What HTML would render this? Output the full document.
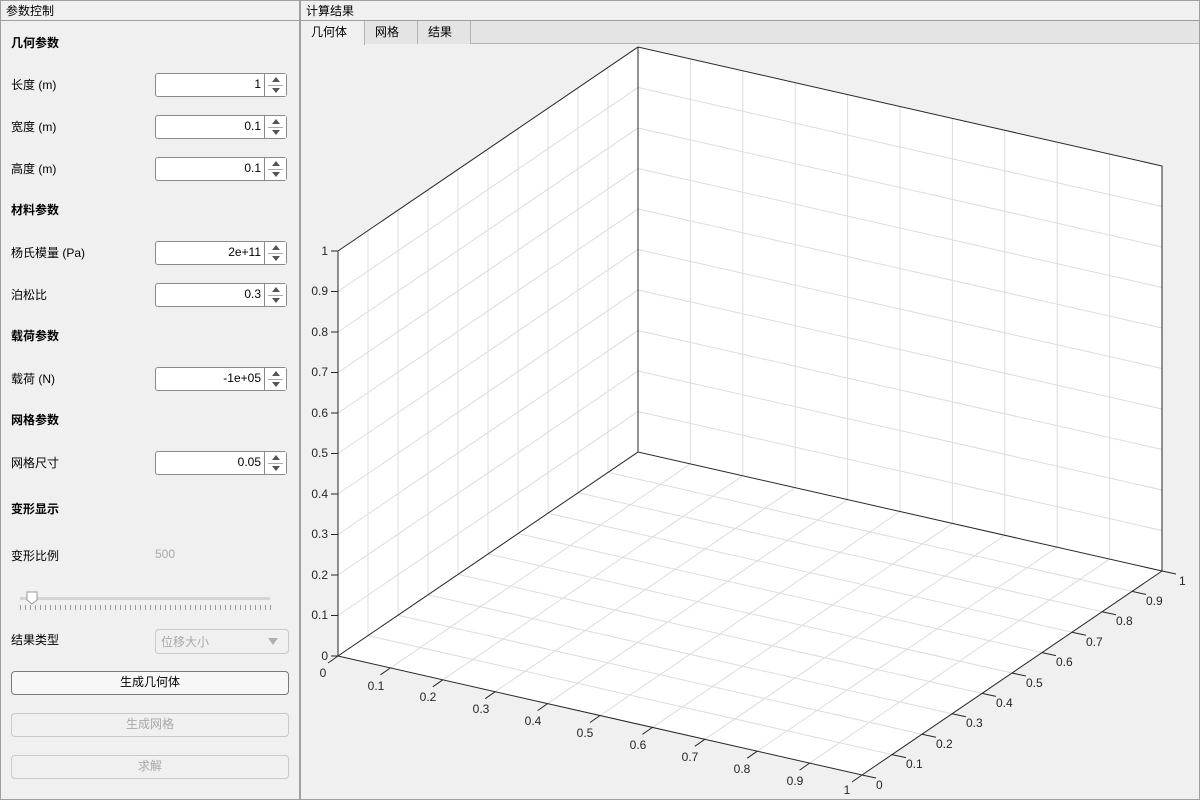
<!DOCTYPE html>
<html><head><meta charset="utf-8"><style>
*{box-sizing:border-box;margin:0;padding:0}
body{width:1200px;height:800px;background:#f0f0f0;font-family:"Liberation Sans","Noto Sans CJK SC",sans-serif;font-size:12px;color:#000;position:relative;overflow:hidden}
.abs{position:absolute}
.panel{position:absolute;box-shadow:inset 0 0 0 1px #a0a0a0;background:#f0f0f0}
.ptitle{position:absolute;left:0;right:0;top:0;height:21px;border:1px solid #a0a0a0;padding:1px 0 0 5px;font-size:12px}
.lbl{position:absolute;left:11px;font-size:12px}
.h{font-weight:bold}
.spin{position:absolute;left:155px;width:132px;height:24px;border:1px solid #8a8a8a;border-radius:3px;background:#fff}
.spin .v{position:absolute;right:25px;top:3px}
.spin .ar{position:absolute;right:0;top:0;width:22px;height:22px;border-left:1px solid #8a8a8a;background:#fff}
.spin .ar:after{content:"";position:absolute;left:3px;right:3px;top:11px;border-top:1px solid #aaa}
.up{position:absolute;left:7px;top:3px;border-left:4px solid transparent;border-right:4px solid transparent;border-bottom:5px solid #555}
.dn{position:absolute;left:7px;top:14px;border-left:4px solid transparent;border-right:4px solid transparent;border-top:5px solid #555}
.btn{position:absolute;left:11px;width:278px;height:24px;border:1px solid #7a7a7a;border-radius:4px;background:#f7f7f7;text-align:center;line-height:21px}
.dis{border-color:#c8c8c8;color:#a8a8a8;background:#f0f0f0}
.tab{position:absolute;top:21px;height:23px;border-right:1px solid #b4b4b4;padding:2px 0 0 10px;background:#e4e4e4}
svg text{font-family:"Liberation Sans",sans-serif;font-size:12px;fill:#262626}
</style></head><body>
<div class="panel" style="left:0;top:0;width:300px;height:800px">
<div class="ptitle">参数控制</div>
<div class="lbl h" style="top:34px">几何参数</div>
<div class="lbl" style="top:76px">长度 (m)</div>
<div class="spin" style="top:73px"><span class="v">1</span><div class="ar"><i class="up"></i><i class="dn"></i></div></div>
<div class="lbl" style="top:118px">宽度 (m)</div>
<div class="spin" style="top:115px"><span class="v">0.1</span><div class="ar"><i class="up"></i><i class="dn"></i></div></div>
<div class="lbl" style="top:160px">高度 (m)</div>
<div class="spin" style="top:157px"><span class="v">0.1</span><div class="ar"><i class="up"></i><i class="dn"></i></div></div>
<div class="lbl h" style="top:201px">材料参数</div>
<div class="lbl" style="top:244px">杨氏模量 (Pa)</div>
<div class="spin" style="top:241px"><span class="v">2e+11</span><div class="ar"><i class="up"></i><i class="dn"></i></div></div>
<div class="lbl" style="top:286px">泊松比</div>
<div class="spin" style="top:283px"><span class="v">0.3</span><div class="ar"><i class="up"></i><i class="dn"></i></div></div>
<div class="lbl h" style="top:327px">载荷参数</div>
<div class="lbl" style="top:370px">载荷 (N)</div>
<div class="spin" style="top:367px"><span class="v">-1e+05</span><div class="ar"><i class="up"></i><i class="dn"></i></div></div>
<div class="lbl h" style="top:411px">网格参数</div>
<div class="lbl" style="top:454px">网格尺寸</div>
<div class="spin" style="top:451px"><span class="v">0.05</span><div class="ar"><i class="up"></i><i class="dn"></i></div></div>
<div class="lbl h" style="top:500px">变形显示</div>
<div class="lbl" style="top:547px">变形比例</div>
<div class="abs" style="left:155px;top:547px;color:#a8a8a8">500</div>
<div class="abs" style="left:20px;top:597px;width:250px;height:3px;background:#d4d4d4"></div>
<svg class="abs" style="left:0;top:590px" width="300" height="24">
<path d="M27 2 H37 V10 L32 14 L27 10 Z" fill="#fff" stroke="#999"/>
<g stroke="#999">
<path d="M20.5 15v5M25.5 15v5M30.5 15v5M35.5 15v5M40.5 15v5M45.5 15v5M50.5 15v5M55.5 15v5M60.5 15v5M65.5 15v5M70.5 15v5M75.5 15v5M80.5 15v5M85.5 15v5M90.5 15v5M95.5 15v5M100.5 15v5M105.5 15v5M110.5 15v5M115.5 15v5M120.5 15v5M125.5 15v5M130.5 15v5M135.5 15v5M140.5 15v5M145.5 15v5M150.5 15v5M155.5 15v5M160.5 15v5M165.5 15v5M170.5 15v5M175.5 15v5M180.5 15v5M185.5 15v5M190.5 15v5M195.5 15v5M200.5 15v5M205.5 15v5M210.5 15v5M215.5 15v5M220.5 15v5M225.5 15v5M230.5 15v5M235.5 15v5M240.5 15v5M245.5 15v5M250.5 15v5M255.5 15v5M260.5 15v5M265.5 15v5M270.5 15v5"/></g></svg>
<div class="lbl" style="top:631px">结果类型</div>
<div class="abs" style="left:155px;top:629px;width:134px;height:25px;border:1px solid #c8c8c8;border-radius:4px;color:#a8a8a8;padding:3px 0 0 5px">位移大小<span class="abs" style="right:10px;top:8px;border-left:5px solid transparent;border-right:5px solid transparent;border-top:7px solid #b0b0b0"></span></div>
<div class="btn" style="top:671px">生成几何体</div>
<div class="btn dis" style="top:713px">生成网格</div>
<div class="btn dis" style="top:755px">求解</div>
</div>
<div class="panel" style="left:300px;top:0;width:900px;height:800px">
<div class="ptitle">计算结果</div>
<div class="abs" style="left:1px;right:1px;top:21px;height:23px;background:#e4e4e4;border-bottom:1px solid #b4b4b4"></div>
<div class="tab" style="left:1px;width:64px;background:#f0f0f0;height:24px">几何体</div>
<div class="tab" style="left:65px;width:53px">网格</div>
<div class="tab" style="left:118px;width:53px">结果</div>
</div>
<svg class="abs" style="left:0;top:0" width="1200" height="800">
<g fill="#fff">
<polygon points="338,656 862,775 1162,571 638,452"/>
<polygon points="338,656 638,452 638,47 338,251"/>
<polygon points="638,452 1162,571 1162,166 638,47"/>
</g>
<g fill="none" stroke="#dcdcdc" stroke-width="1">
<g transform="matrix(524,119,300,-204,338,656)"><path vector-effect="non-scaling-stroke" d="M.1 0V1M.2 0V1M.3 0V1M.4 0V1M.5 0V1M.6 0V1M.7 0V1M.8 0V1M.9 0V1M0 .1H1M0 .2H1M0 .3H1M0 .4H1M0 .5H1M0 .6H1M0 .7H1M0 .8H1M0 .9H1"/></g>
<g transform="matrix(300,-204,0,-405,338,656)"><path vector-effect="non-scaling-stroke" d="M.1 0V1M.2 0V1M.3 0V1M.4 0V1M.5 0V1M.6 0V1M.7 0V1M.8 0V1M.9 0V1M0 .1H1M0 .2H1M0 .3H1M0 .4H1M0 .5H1M0 .6H1M0 .7H1M0 .8H1M0 .9H1"/></g>
<g transform="matrix(524,119,0,-405,638,452)"><path vector-effect="non-scaling-stroke" d="M.1 0V1M.2 0V1M.3 0V1M.4 0V1M.5 0V1M.6 0V1M.7 0V1M.8 0V1M.9 0V1M0 .1H1M0 .2H1M0 .3H1M0 .4H1M0 .5H1M0 .6H1M0 .7H1M0 .8H1M0 .9H1"/></g>
</g>
<g fill="none" stroke="#262626" stroke-width="1">
<path d="M338 656L862 775L1162 571L638 452Z M338 656V251L638 47L1162 166V571 M638 452V47"/>
<path d="M338 656h-7 M338 615.5h-7 M338 575h-7 M338 534.5h-7 M338 494h-7 M338 453.5h-7 M338 413h-7 M338 372.5h-7 M338 332h-7 M338 291.5h-7 M338 251h-7"/>
<path d="M338 656l-10 7 M390.4 667.9l-10 7 M442.8 679.8l-10 7 M495.2 691.7l-10 7 M547.6 703.6l-10 7 M600 715.5l-10 7 M652.4 727.4l-10 7 M704.8 739.3l-10 7 M757.2 751.2l-10 7 M809.6 763.1l-10 7 M862 775l-10 7"/>
<path d="M862 775l14 3 M892 754.6l14 3 M922 734.2l14 3 M952 713.8l14 3 M982 693.4l14 3 M1012 673l14 3 M1042 652.6l14 3 M1072 632.2l14 3 M1102 611.8l14 3 M1132 591.4l14 3 M1162 571l14 3"/>
</g>
<g text-anchor="end">
<text x="328" y="660">0</text><text x="328" y="619">0.1</text><text x="328" y="579">0.2</text><text x="328" y="538">0.3</text><text x="328" y="498">0.4</text><text x="328" y="457">0.5</text><text x="328" y="417">0.6</text><text x="328" y="376">0.7</text><text x="328" y="336">0.8</text><text x="328" y="295">0.9</text><text x="328" y="255">1</text>
</g>
<g text-anchor="middle">
<text x="323" y="677">0</text><text x="376" y="690">0.1</text><text x="428" y="701">0.2</text><text x="481" y="713">0.3</text><text x="533" y="725">0.4</text><text x="585" y="737">0.5</text><text x="638" y="749">0.6</text><text x="690" y="761">0.7</text><text x="742" y="773">0.8</text><text x="795" y="785">0.9</text><text x="847" y="794">1</text>
</g>
<g>
<text x="876" y="789">0</text><text x="906" y="768">0.1</text><text x="936" y="748">0.2</text><text x="966" y="727">0.3</text><text x="996" y="707">0.4</text><text x="1026" y="687">0.5</text><text x="1056" y="666">0.6</text><text x="1086" y="646">0.7</text><text x="1116" y="625">0.8</text><text x="1146" y="605">0.9</text><text x="1179" y="585">1</text>
</g>
</svg>
</body></html>
